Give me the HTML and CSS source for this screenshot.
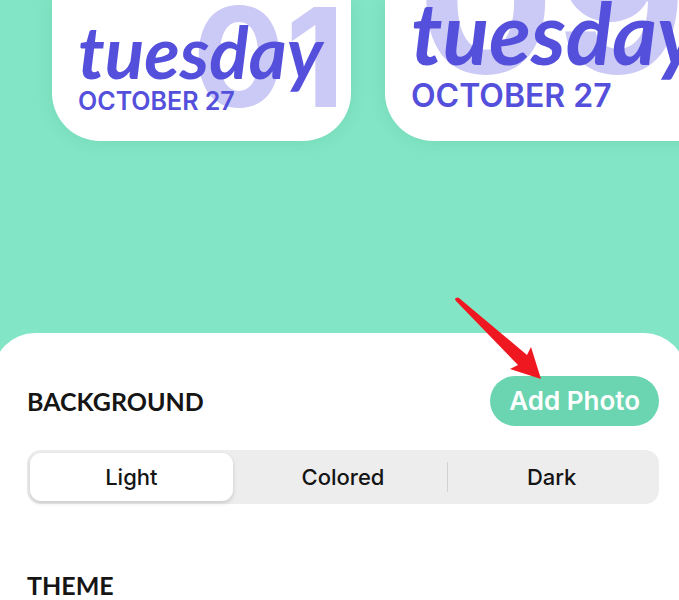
FILE: index.html
```html
<!DOCTYPE html>
<html lang="en">
<head>
<meta charset="utf-8">
<meta name="viewport" content="width=device-width, initial-scale=1">
<title>Widget background</title>
<link rel="stylesheet" href="styles.css">
</head>
<body>
<main class="screen">
  <section class="preview" aria-label="Widget previews">
    <article class="widget widget-small">
      <span class="number">01</span>
      <p class="day">tuesday</p>
      <p class="date">OCTOBER 27</p>
    </article>
    <article class="widget widget-large">
      <span class="number">09</span>
      <p class="day">tuesday</p>
      <p class="date">OCTOBER 27</p>
    </article>
  </section>
  <section class="panel">
    <header class="panel-header">
      <h2>BACKGROUND</h2>
      <div class="photo-action">
        <button class="add-photo" type="button">Add Photo</button>
        <svg class="arrow" width="90" height="84" viewBox="0 0 90 84" aria-hidden="true">
          <path d="M3 2Q1 3 3 5L65 69L57 73L88 83L78 51L74 59L6 2Q5 1 3 2Z" fill="#f01820"/>
        </svg>
      </div>
    </header>
    <div class="segments" role="radiogroup" aria-label="Background">
      <label class="segment"><input type="radio" name="background" checked><span>Light</span></label>
      <label class="segment"><input type="radio" name="background"><span>Colored</span></label>
      <label class="segment"><input type="radio" name="background"><span>Dark</span></label>
    </div>
    <h2>THEME</h2>
  </section>
</main>
</body>
</html>
```
FILE: styles.css
```css
* { box-sizing: border-box; }
body {
  margin: 0;
  background: #fff;
  color: #151515;
  font-family: Inter, "Liberation Sans", sans-serif;
}
h2, p { margin: 0; }
.screen {
  min-height: 100vh;
  overflow: hidden;
  background: #82e5c5;
}
.preview {
  display: flex;
  align-items: flex-start;
  gap: 34px;
  padding: 0 0 192px 52px;
}
.widget {
  position: relative;
  flex: none;
  overflow: hidden;
  background: #fff;
  border-radius: 0 0 48px 48px;
  box-shadow: 0 0 16px rgba(40, 140, 110, 0.15);
  color: #5450dc;
  white-space: nowrap;
}
.widget-small { width: 299px; padding: 15px 26px 25px; }
.widget-large { width: 420px; padding: 0 26px 26px; }
.number {
  position: absolute;
  color: #cbc9f5;
  font-weight: 700;
  line-height: 1;
}
.widget-small .number { right: 6px; bottom: 15px; font-size: 138px; }
.widget-large .number { left: 32px; bottom: 40px; font-size: 204px; }
.day {
  position: relative;
  font-family: Lato, "Liberation Sans", sans-serif;
  font-style: italic;
  font-weight: 700;
}
.date { position: relative; font-weight: 600; }
.widget-small .day { font-size: 73px; line-height: 72px; }
.widget-small .date { font-size: 25px; line-height: 29px; }
.widget-large .day { padding-bottom: 12px; font-size: 86px; line-height: 64px; }
.widget-large .date { font-size: 32px; line-height: 39px; }
.panel {
  margin: 0 -7px;
  padding: 43px 27px 0 34px;
  min-height: 267px;
  background: #fff;
  border-radius: 42px 42px 0 0;
}
.panel-header {
  display: flex;
  align-items: center;
  justify-content: space-between;
}
h2 {
  font-family: Lato, "Liberation Sans", sans-serif;
  font-size: 25px;
  line-height: 30px;
  font-weight: 700;
}
.photo-action { position: relative; }
.add-photo {
  display: block;
  height: 50px;
  padding: 0 19px;
  border: 0;
  border-radius: 25px;
  background: #6bd5b1;
  color: #fff;
  font: 600 26px/50px Inter, "Liberation Sans", sans-serif;
}
.arrow {
  position: absolute;
  right: 116px;
  bottom: 46px;
  pointer-events: none;
}
.segments {
  display: grid;
  grid-template-columns: repeat(3, 1fr);
  margin: 24px 0 66px;
  padding: 3px;
  border-radius: 14px;
  background: #ededed;
}
.segment {
  position: relative;
  display: block;
  font-size: 22px;
  line-height: 48px;
  font-weight: 500;
  text-align: center;
}
.segment input {
  position: absolute;
  inset: 0;
  margin: 0;
  opacity: 0;
}
.segment span { display: block; border-radius: 11px; }
.segment input:checked + span {
  margin-right: 6px;
  background: #fff;
  box-shadow: 0 2px 4px rgba(0, 0, 0, 0.16);
}
.segment:last-child::before {
  content: "";
  position: absolute;
  left: 0;
  top: 9px;
  bottom: 9px;
  border-left: 1px solid #d2d2d2;
}
```
